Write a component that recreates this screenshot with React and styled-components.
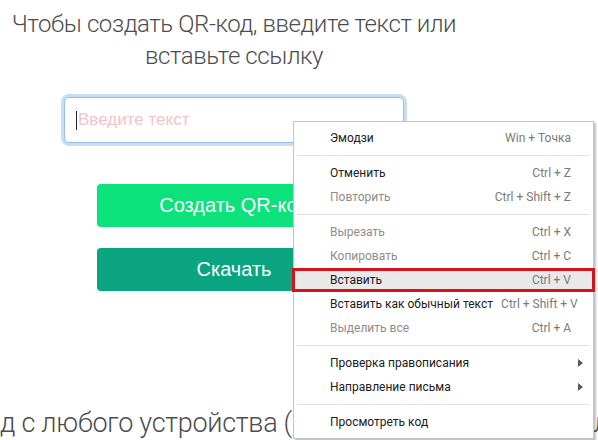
import React from 'react'
import styled, { createGlobalStyle } from 'styled-components'

const GlobalStyle = createGlobalStyle`
  html, body {
    margin: 0;
    padding: 0;
    background: #fff;
    overflow: hidden;
  }
`

const Page = styled.div`
  position: relative;
  width: 598px;
  height: 440px;
  overflow: hidden;
  background: #fff;
`

const Column = styled.main`
  width: 468px;
  display: flex;
  flex-direction: column;
  align-items: center;
`

const lightText = `
  font-family: Roboto, 'Noto Sans', sans-serif;
  font-weight: 300;
  line-height: 32px;
  color: #4d4d4d;
`

const Heading = styled.h1`
  ${lightText}
  font-size: 24px;
  letter-spacing: -0.4px;
  margin: 8px 0 0;
  text-align: center;
  width: 460px;
`

const Field = styled.div`
  margin-top: 25px;
  width: 340px;
  height: 46px;
  box-sizing: border-box;
  border: 1px solid #94bde9;
  border-radius: 5px;
  box-shadow: 0 0 0 3px #c9ddf5;
  display: flex;
  align-items: center;
  padding-left: 11px;
  background: #fff;
`

const Caret = styled.span`
  width: 1px;
  height: 19px;
  background: #222;
  margin-right: 1px;
`

const Placeholder = styled.span`
  font-family: 'Liberation Sans', Arial, sans-serif;
  font-size: 17px;
  color: #f3c3c9;
`

const Button = styled.button`
  margin-top: ${p => p.gap}px;
  width: 274px;
  height: 43px;
  border: none;
  border-radius: 4px;
  background: ${p => p.bg};
  color: #fff;
  font-family: 'Liberation Sans', Arial, sans-serif;
  font-size: 20px;
  cursor: pointer;
`

const FooterLine = styled.div`
  ${lightText}
  font-size: 27px;
  letter-spacing: -0.3px;
  margin-top: 116px;
  align-self: stretch;
  display: flex;
  white-space: nowrap;
`

/* the start of the line runs off the left edge of the window */
const Cut = styled.span`
  width: 0;
  display: flex;
  justify-content: flex-end;
`

const Menu = styled.ul`
  position: absolute;
  left: 293px;
  top: 121px;
  width: 301px;
  box-sizing: border-box;
  margin: 0;
  padding: 4px 0;
  list-style: none;
  background: #fff;
  border: 1px solid #c4c4c4;
  box-shadow: 2px 2px 2px rgba(0, 0, 0, 0.25);
  font-family: Roboto, 'Noto Sans', sans-serif;
  font-size: 12px;
`

const Item = styled.li`
  height: 24px;
  display: flex;
  align-items: center;
  justify-content: space-between;
  white-space: nowrap;
  color: ${p => (p.disabled ? '#8c8c8c' : '#202020')};
  background: ${p => (p.active ? '#e9e9e9' : 'transparent')};
  box-shadow: ${p => (p.active ? 'inset 0 0 0 3px #d3141c' : 'none')};
  margin: ${p => (p.active ? '0 -2px' : '0')};
  padding-left: ${p => (p.active ? '38px' : '36px')};
  padding-right: ${p => (p.active ? '24px' : '22px')};
`

const Shortcut = styled.span`
  color: #7a7a7a;
  margin-left: 8px;
`

const Separator = styled.li`
  height: 11px;
  display: flex;
  align-items: center;
  padding: 0 3px;
  &::after {
    content: '';
    flex: 1;
    height: 1px;
    background: #e1e1e1;
  }
`

const Arrow = styled.span`
  width: 0;
  height: 0;
  margin-right: -12px;
  border-top: 4px solid transparent;
  border-bottom: 4px solid transparent;
  border-left: 5px solid #5a5a5a;
`

const menu = [
  { label: 'Эмодзи', key: 'Win + Точка' },
  'sep',
  { label: 'Отменить', key: 'Ctrl + Z' },
  { label: 'Повторить', key: 'Ctrl + Shift + Z', disabled: true },
  'sep',
  { label: 'Вырезать', key: 'Ctrl + X', disabled: true },
  { label: 'Копировать', key: 'Ctrl + C', disabled: true },
  { label: 'Вставить', key: 'Ctrl + V', active: true },
  { label: 'Вставить как обычный текст', key: 'Ctrl + Shift + V' },
  { label: 'Выделить все', key: 'Ctrl + A', disabled: true },
  'sep',
  { label: 'Проверка правописания', sub: true },
  { label: 'Направление письма', sub: true },
  'sep',
  { label: 'Просмотреть код' },
]

export default function App() {
  return (
    <>
      <GlobalStyle />
      <Page>
        <Column>
          <Heading>Чтобы создать QR-код, введите текст или вставьте ссылку</Heading>
          <Field>
            <Caret />
            <Placeholder>Введите текст</Placeholder>
          </Field>
          <Button gap={41} bg="#0be27c">Создать QR-код</Button>
          <Button gap={21} bg="#0aa580">Скачать</Button>
          <FooterLine>
            <Cut>Сканируйте QR-ко</Cut>
            <span>д с любого устройства (компьютера, телефона или планшета)</span>
          </FooterLine>
        </Column>
        <Menu>
          {menu.map((m, i) =>
            m === 'sep' ? (
              <Separator key={i} />
            ) : (
              <Item key={i} disabled={m.disabled} active={m.active}>
                <span>{m.label}</span>
                {m.sub ? <Arrow /> : <Shortcut>{m.key}</Shortcut>}
              </Item>
            )
          )}
        </Menu>
      </Page>
    </>
  )
}
